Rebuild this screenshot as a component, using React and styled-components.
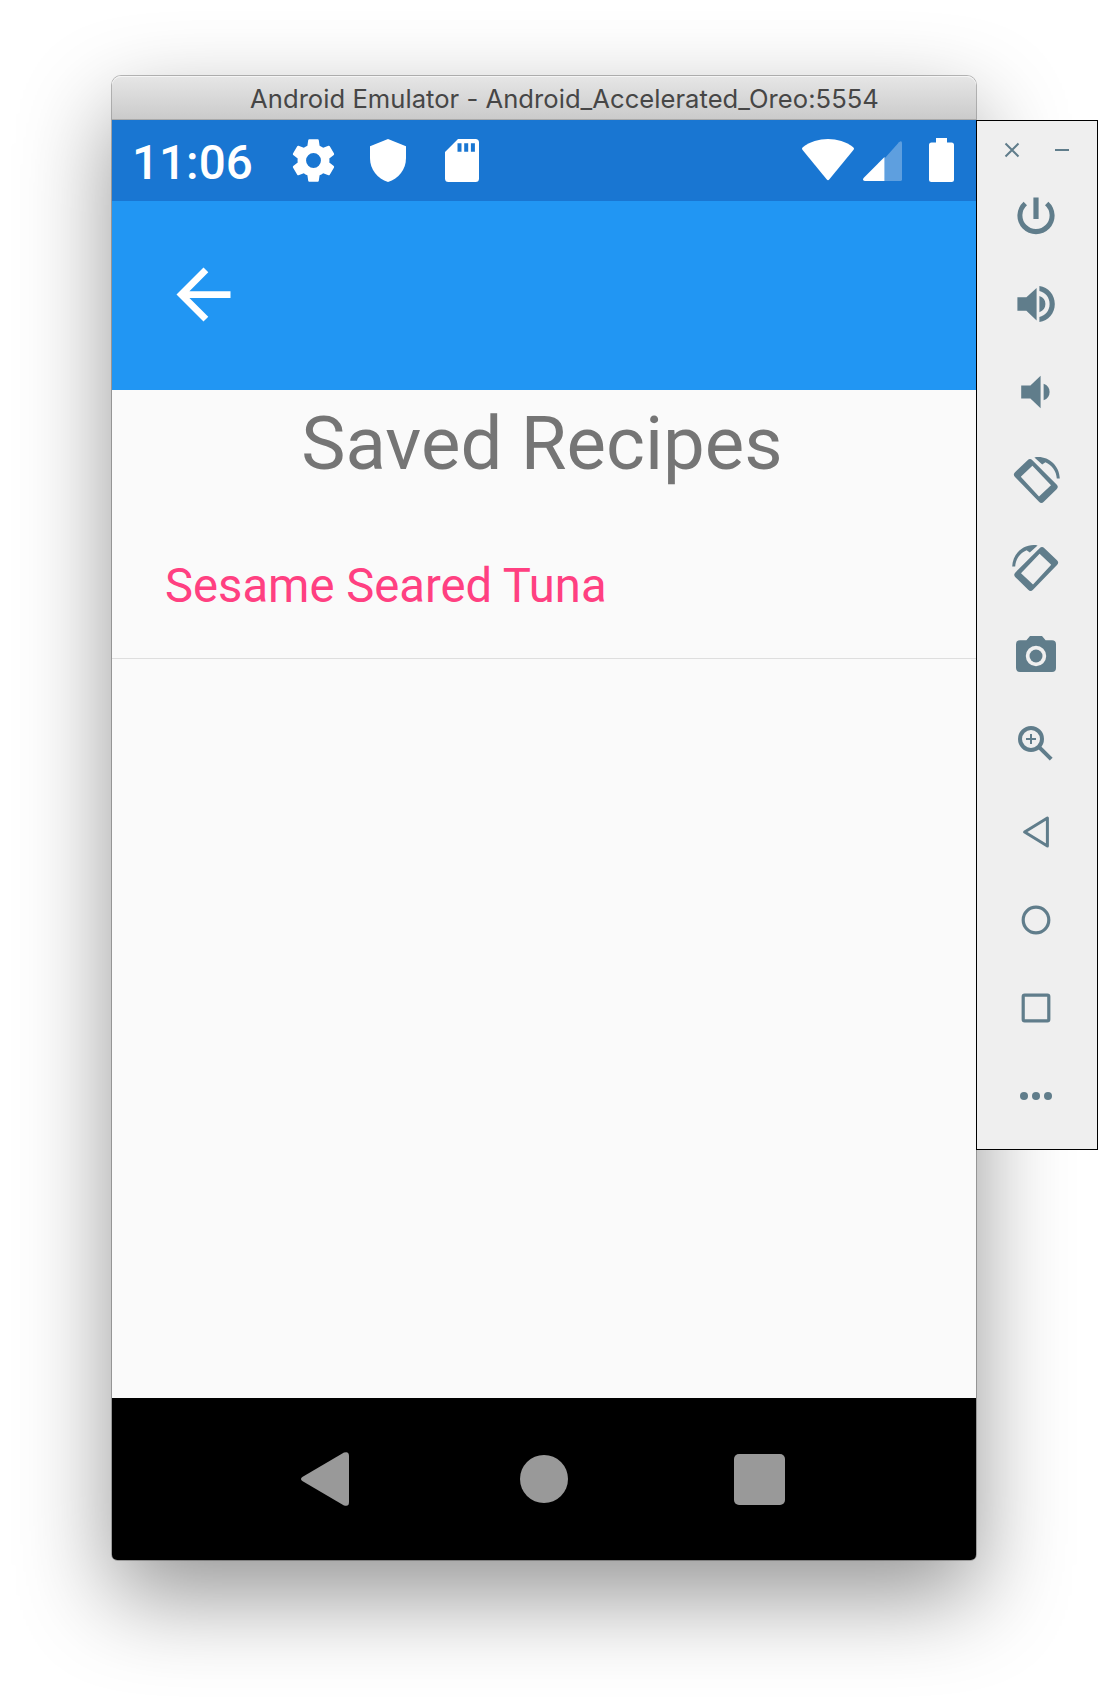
import React from "react";
import styled, { createGlobalStyle } from "styled-components";

const GlobalStyle = createGlobalStyle`
  *, *::before, *::after { box-sizing: border-box; }
  body { margin: 0; background: #fff; overflow: hidden; }
`;

const Desktop = styled.div`
  display: flex;
  align-items: flex-start;
  width: 1098px;
  height: 1708px;
  padding: 76px 0 0 112px;
  overflow: hidden;
  background: #fff;
`;

const EmulatorWindow = styled.main`
  display: flex;
  flex-direction: column;
  flex: none;
  width: 864px;
  height: 1484px;
  border-radius: 9px 9px 6px 6px;
  box-shadow: 0 0 0 1px rgba(0, 0, 0, 0.26), 0 36px 92px rgba(0, 0, 0, 0.42);
`;

const TitleBar = styled.header`
  display: flex;
  align-items: center;
  justify-content: center;
  height: 44px;
  padding: 3px 0 0 41px;
  border-radius: 9px 9px 0 0;
  border-bottom: 1px solid #a9a9a9;
  background: linear-gradient(#e6e6e6, #cbcbcb);
  box-shadow: inset 0 1px 0 #f5f5f5;
  color: #464646;
  font: 400 25.6px/40px Inter, "Liberation Sans", sans-serif;
  letter-spacing: 0.03px;
  white-space: nowrap;
`;

const StatusBar = styled.div`
  display: flex;
  align-items: center;
  justify-content: space-between;
  height: 81px;
  padding: 0 22px 0 20px;
  background: #1976d2;
`;

const StatusGroup = styled.div`
  display: flex;
  align-items: center;
`;

const Clock = styled.time`
  width: 156px;
  color: #fff;
  font: 500 47.6px/56px Roboto, sans-serif;
  padding-top: 4px;
`;

const Glyph = styled.svg`
  display: block;
  flex: none;
  width: ${(p) => p.$w}px;
  height: ${(p) => p.$h}px;
  margin-left: ${(p) => p.$gap || 0}px;
  margin-bottom: ${(p) => p.$lift || 0}px;
  fill: ${(p) => p.$fill || "#fff"};
`;

const AppBar = styled.div`
  display: flex;
  align-items: center;
  height: 189px;
  padding: 0 0 3px 51px;
  background: #2196f3;
`;

const Content = styled.section`
  flex: 1;
  background: #fafafa;
  font-family: Roboto, sans-serif;
`;

const Heading = styled.h1`
  height: 130px;
  margin: 0;
  padding: 10px 4px 0 0;
  color: #757575;
  font-size: 74.4px;
  font-weight: 400;
  line-height: 88px;
  text-align: center;
`;

const RecipeRow = styled.div`
  display: flex;
  align-items: center;
  height: 139px;
  padding: 0 53px 7px;
  border-bottom: 1px solid #dedede;
  color: #ff4081;
  font-size: 47.2px;
`;

const NavBar = styled.nav`
  display: flex;
  align-items: center;
  padding-left: 189px;
  height: 162px;
  border-radius: 0 0 5px 5px;
  background: #000;
`;

const Toolbar = styled.aside`
  display: flex;
  flex-direction: column;
  align-items: center;
  flex: none;
  width: 122px;
  height: 1030px;
  margin-top: 44px;
  padding-right: 2px;
  border: 1px solid #000;
  background: #efefef;
`;

const WindowControls = styled.div`
  display: flex;
  justify-content: space-between;
  width: 65px;
  height: 51px;
  padding-top: 21px;
  margin-left: 1px;
`;

const ToolButton = styled.button`
  display: flex;
  align-items: center;
  justify-content: center;
  width: 88px;
  height: 88px;
  padding: 0;
  border: 0;
  background: none;

  svg {
    width: 48px;
    height: 48px;
    overflow: visible;
    fill: #607d8b;
  }
`;

const slate = "#607d8b";

const line = { fill: "none", stroke: slate, strokeLinejoin: "round" };

const RotateArt = () => (
  <>
    <path
      fillRule="evenodd"
      d="M7.800 2.100a1.700 1.700 0 0 1 2.400 0L22.300 14.200a1.700 1.700 0 0 1 0 2.400L15.900 22.900a1.700 1.700 0 0 1-2.400 0L1.500 10.500a1.700 1.700 0 0 1 0-2.400ZM10.200 4.900 4.400 10.400 13.500 20.200 19.500 14.600Z"
    />
    <path d="M11.200.700C17.500-.500 23.700 4.200 23.900 11.300h-1.500C22.200 7.600 20 4.500 16.700 3.100L15.100 4.200Z" />
  </>
);

const tools = [
  {
    label: "Power",
    art: <path d="M13.3 2.7h-2.6v10.8h2.6V2.7zm4.9 2.2-1.7 1.7a6.8 6.8 0 1 1-9 0L5.8 4.9a9.3 9.3 0 1 0 12.4 0z" />,
  },
  {
    label: "Volume up",
    art: (
      <>
        <path d="M2.7 8.6v6.8h4.5l5.1 4.8V4L7.2 8.6z" />
        <path d="M13.7 8c2 .7 3 2.1 3 4s-1 3.4-3 4.1zM13.7 3c4.5.6 7.7 4.3 7.7 9s-3.2 8.4-7.7 9v-2.5c3-.7 5.1-3.2 5.1-6.5s-2.1-5.8-5.1-6.5z" />
      </>
    ),
  },
  {
    label: "Volume down",
    art: (
      <>
        <path d="M4.6 8.7v6.6h4.6l5.1 4.8V3.9L9.2 8.7z" />
        <path d="M15.8 7.9c2 .7 3 2.1 3 4.1s-1 3.4-3 4.1z" />
      </>
    ),
  },
  { label: "Rotate left", art: <RotateArt /> },
  {
    label: "Rotate right",
    art: (
      <g transform="matrix(-1 0 0 1 24 0)">
        <RotateArt />
      </g>
    ),
  },
  {
    label: "Take screenshot",
    art: (
      <>
        <circle cx="12" cy="12" r="3.25" />
        <path
          fillRule="evenodd"
          d="M9 2 7.2 4.1H4a2 2 0 0 0-2 2V18a2 2 0 0 0 2 2h16a2 2 0 0 0 2-2V6.100a2 2 0 0 0-2-2h-3.200L15 2ZM12 6.900a5.100 5.100 0 1 1 0 10.200 5.100 5.100 0 0 1 0-10.200Z"
        />
      </>
    ),
  },
  {
    label: "Zoom",
    art: (
      <g fill="none" stroke={slate}>
        <circle cx="9.5" cy="9.5" r="5.5" strokeWidth="2" />
        <path strokeWidth="2" d="m13.8 13.8 5.8 5.8" />
        <path strokeWidth="1" d="M9.5 7v5M7 9.5h5" />
      </g>
    ),
  },
  { label: "Back", art: <path {...line} strokeWidth="1.5" d="M17.7 5v14L6.3 12z" /> },
  { label: "Home", art: <circle {...line} strokeWidth="1.6" cx="12" cy="12" r="6.4" /> },
  { label: "Overview", art: <rect {...line} strokeWidth="1.6" x="5.600" y="5.600" width="12.800" height="12.800" rx=".7" /> },
  {
    label: "More",
    art: (
      <>
        <circle cx="6" cy="12" r="2" />
        <circle cx="12" cy="12" r="2" />
        <circle cx="18" cy="12" r="2" />
      </>
    ),
  },
];

export default function App() {
  return (
    <>
      <GlobalStyle />
      <Desktop>
        <EmulatorWindow>
          <TitleBar>Android Emulator - Android_Accelerated_Oreo:5554</TitleBar>
          <StatusBar>
            <StatusGroup>
              <Clock>11:06</Clock>
              <Glyph $w={51} $h={51} viewBox="0 0 24 24">
                <path d="M19.43 12.98c.04-.32.07-.64.07-.98s-.03-.66-.07-.98l2.11-1.65c.19-.15.24-.42.12-.64l-2-3.46c-.12-.22-.39-.3-.61-.22l-2.49 1c-.52-.4-1.08-.73-1.69-.98l-.38-2.65A.488.488 0 0 0 14 2h-4c-.25 0-.46.18-.49.42l-.38 2.65c-.61.25-1.17.59-1.69.98l-2.49-1c-.23-.09-.49 0-.61.22l-2 3.46c-.13.22-.07.49.12.64l2.11 1.65c-.04.32-.07.65-.07.98s.03.66.07.98l-2.11 1.65c-.19.15-.24.42-.12.64l2 3.46c.12.22.39.3.61.22l2.49-1c.52.4 1.08.73 1.69.98l.38 2.65c.03.24.24.42.49.42h4c.25 0 .46-.18.49-.42l.38-2.65c.61-.25 1.17-.59 1.69-.98l2.49 1c.23.09.49 0 .61-.22l2-3.46c.12-.22.07-.49-.12-.64l-2.11-1.65zM12 15.5a3.5 3.5 0 1 1 0-7 3.5 3.5 0 0 1 0 7z" />
              </Glyph>
              <Glyph $w={36} $h={43} $gap={31} viewBox="0 0 36 43">
                <path d="M18 0 36 7.3V19c0 11.5-7.4 20.8-18 24C7.4 39.8 0 30.5 0 19V7.3Z" />
              </Glyph>
              <Glyph $w={34} $h={43} $gap={39} viewBox="0 0 34 43">
                <path
                  fillRule="evenodd"
                  d="M13 0h17.5a3.500 3.500 0 0 1 3.500 3.500v36a3.500 3.500 0 0 1-3.500 3.500H3.500A3.500 3.500 0 0 1 0 39.500V13ZM12.500 4.300v8.400h4V4.300ZM19.200 4.300v8.400h4V4.300ZM25.900 4.300v8.400h4V4.300Z"
                />
              </Glyph>
            </StatusGroup>
            <StatusGroup>
              <Glyph $w={52} $h={42} $lift={2} viewBox="0 0 52 42">
                <path d="M.8 8.2C15-2.7 37-2.7 51.2 8.2c.9.8 1 1.6.4 2.5L27.4 40.3q-1.4 1.7-2.8 0L.4 10.7C-.2 9.8-.1 9 .8 8.2Z" />
              </Glyph>
              <Glyph $w={39} $h={40} $gap={9} viewBox="0 0 39 40">
                <path fillOpacity=".3" d="M21.500 17.500 36 1.200q3-2.400 3 1.200v36q0 1.600-1.600 1.600H21.500Z" />
                <path d="M21.500 16v24H1.800Q-1 39.500.6 37Z" />
              </Glyph>
              <Glyph $w={25} $h={44} $gap={27} $lift={2} viewBox="0 0 25 44">
                <path d="M7 0h11v4.5h4.500A2.500 2.500 0 0 1 25 7v34.500a2.500 2.500 0 0 1-2.500 2.500h-20A2.500 2.500 0 0 1 0 41.500V7a2.500 2.500 0 0 1 2.500-2.500H7Z" />
              </Glyph>
            </StatusGroup>
          </StatusBar>
          <AppBar>
            <Glyph $w={81} $h={81} viewBox="0 0 24 24">
              <path d="M20 11H7.83l5.59-5.59L12 4l-8 8 8 8 1.41-1.41L7.83 13H20v-2z" />
            </Glyph>
          </AppBar>
          <Content>
            <Heading>Saved Recipes</Heading>
            <RecipeRow>Sesame Seared Tuna</RecipeRow>
          </Content>
          <NavBar>
            <Glyph $w={48} $h={54} $fill="#999" viewBox="0 0 48 54">
              <path d="M1.300 25 43 .6Q48-1.200 48 4v46q0 5.200-5 3.400L1.300 29q-2.600-2 0-4Z" />
            </Glyph>
            <Glyph $w={48} $h={48} $gap={171} $fill="#999" viewBox="0 0 48 48">
              <circle cx="24" cy="24" r="24" />
            </Glyph>
            <Glyph $w={51} $h={51} $gap={166} $fill="#999" viewBox="0 0 51 51">
              <rect width="51" height="51" rx="5" />
            </Glyph>
          </NavBar>
        </EmulatorWindow>
        <Toolbar>
          <WindowControls>
            <Glyph $w={16} $h={16} viewBox="0 0 16 16">
              <path stroke={slate} strokeWidth="2" d="m1.500 1.500 13 13m0-13-13 13" />
            </Glyph>
            <Glyph $w={14} $h={16} viewBox="0 0 14 16">
              <path stroke={slate} strokeWidth="2" d="M0 8h14" />
            </Glyph>
          </WindowControls>
          {tools.map((tool) => (
            <ToolButton key={tool.label} aria-label={tool.label}>
              <svg viewBox="0 0 24 24">{tool.art}</svg>
            </ToolButton>
          ))}
        </Toolbar>
      </Desktop>
    </>
  );
}
